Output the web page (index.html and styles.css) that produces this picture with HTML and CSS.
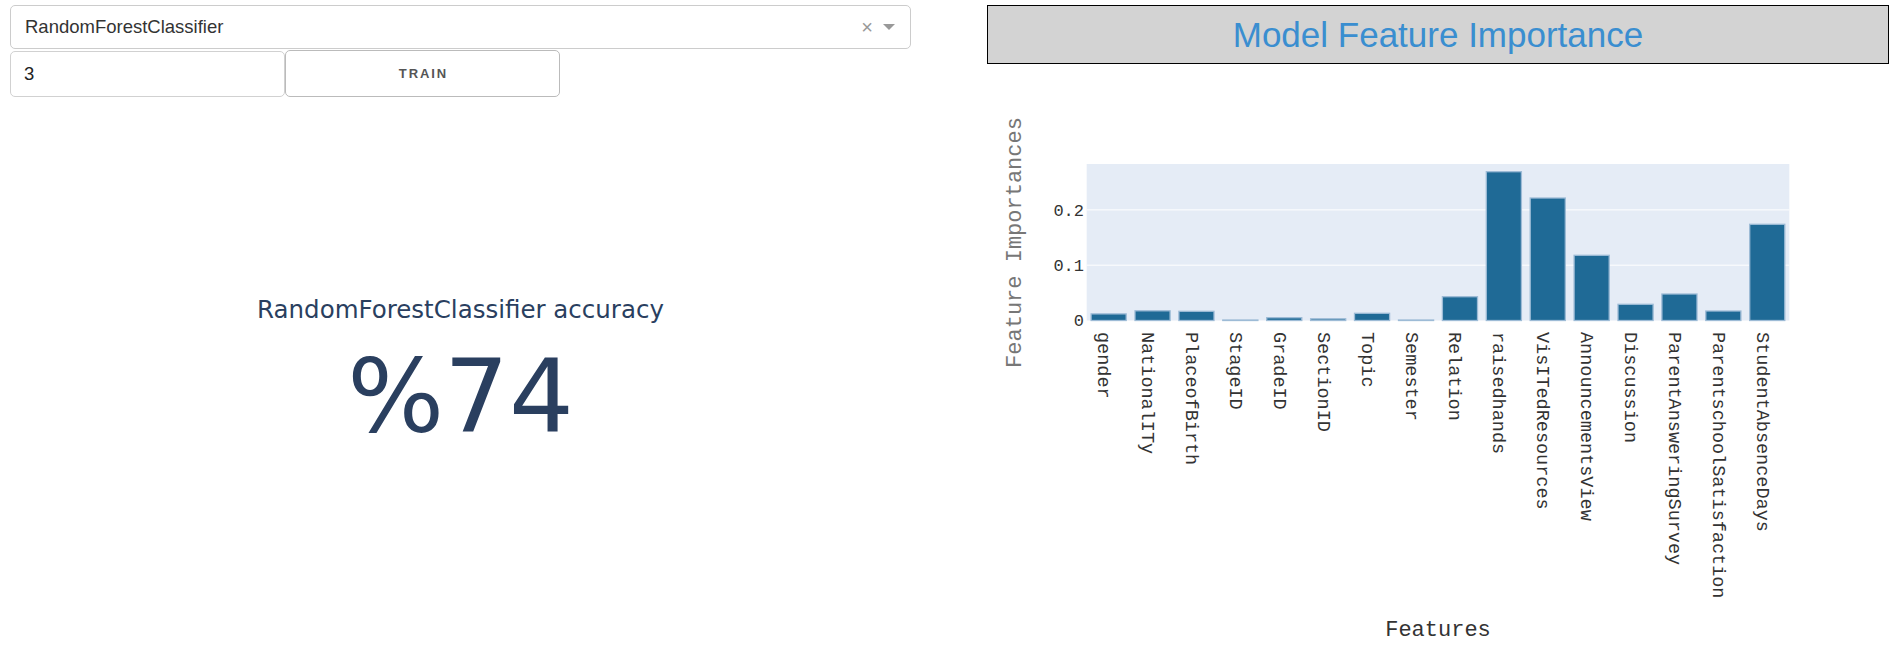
FILE: index.html
```html
<!DOCTYPE html>
<html>
<head>
<meta charset="utf-8">
<link rel="stylesheet" href="styles.css">
</head>
<body>
<div class="page">
  <div class="col left">
    <div class="dropdown">
      <span class="dd-value">RandomForestClassifier</span>
      <span class="dd-clear">×</span>
      <span class="dd-arrow"></span>
    </div>
    <div class="controls">
      <input class="num-input" type="text" value="3">
      <button class="train-btn">Train</button>
    </div>
    <div class="indicator">
      <div class="ind-title">RandomForestClassifier accuracy</div>
      <div class="ind-number">%74</div>
    </div>
  </div>
  <div class="col right">
    <div class="title-box"><h1 class="title">Model Feature Importance</h1></div>
    <svg class="chart" width="902" height="575" viewBox="987 70 902 575" xmlns="http://www.w3.org/2000/svg">
      <rect x="1086.7" y="165" width="702.6" height="156.5" fill="#e5ecf6"/>
      <line x1="1086.7" x2="1789.3" y1="266.2" y2="266.2" stroke="#fff" stroke-width="1"/>
      <line x1="1086.7" x2="1789.3" y1="210.9" y2="210.9" stroke="#fff" stroke-width="1"/>
      <g class="bars" fill="#1f6a96" stroke="#9dbbd6" stroke-width="1.3">
        <rect x="1091.1" y="314.9" width="35.1" height="6.6"/>
        <rect x="1135.0" y="311.8" width="35.1" height="9.7"/>
        <rect x="1178.9" y="312.3" width="35.1" height="9.2"/>
        <rect x="1222.8" y="321.0" width="35.1" height="0.5"/>
        <rect x="1266.7" y="318.7" width="35.1" height="2.8"/>
        <rect x="1310.6" y="319.8" width="35.1" height="1.7"/>
        <rect x="1354.5" y="314.3" width="35.1" height="7.2"/>
        <rect x="1398.5" y="321.0" width="35.1" height="0.5"/>
        <rect x="1442.4" y="297.7" width="35.1" height="23.8"/>
        <rect x="1486.3" y="172.7" width="35.1" height="148.8"/>
        <rect x="1530.2" y="199.0" width="35.1" height="122.5"/>
        <rect x="1574.1" y="256.3" width="35.1" height="65.2"/>
        <rect x="1618.0" y="305.3" width="35.1" height="16.2"/>
        <rect x="1661.9" y="295.0" width="35.1" height="26.5"/>
        <rect x="1705.8" y="312.0" width="35.1" height="9.5"/>
        <rect x="1749.7" y="225.3" width="35.1" height="96.2"/>
      </g>
      <g class="yticks" text-anchor="end">
        <text x="1084" y="327">0</text>
        <text x="1084" y="272">0.1</text>
        <text x="1084" y="216.5">0.2</text>
      </g>
      <g class="xticks">
        <text transform="translate(1102.6 333) rotate(90)">gender</text>
        <text transform="translate(1146.5 333) rotate(90)">NationalITy</text>
        <text transform="translate(1190.4 333) rotate(90)">PlaceofBirth</text>
        <text transform="translate(1234.3 333) rotate(90)">StageID</text>
        <text transform="translate(1278.2 333) rotate(90)">GradeID</text>
        <text transform="translate(1322.1 333) rotate(90)">SectionID</text>
        <text transform="translate(1366.0 333) rotate(90)">Topic</text>
        <text transform="translate(1410.0 333) rotate(90)">Semester</text>
        <text transform="translate(1453.9 333) rotate(90)">Relation</text>
        <text transform="translate(1497.8 333) rotate(90)">raisedhands</text>
        <text transform="translate(1541.7 333) rotate(90)">VisITedResources</text>
        <text transform="translate(1585.6 333) rotate(90)">AnnouncementsView</text>
        <text transform="translate(1629.5 333) rotate(90)">Discussion</text>
        <text transform="translate(1673.4 333) rotate(90)">ParentAnsweringSurvey</text>
        <text transform="translate(1717.3 333) rotate(90)">ParentschoolSatisfaction</text>
        <text transform="translate(1761.2 333) rotate(90)">StudentAbsenceDays</text>
      </g>
      <text class="axis-title" transform="translate(1021 243.5) rotate(-90)" text-anchor="middle">Feature Importances</text>
      <text class="axis-title xtitle" x="1438" y="637" text-anchor="middle">Features</text>
    </svg>
  </div>
</div>
</body>
</html>
```

FILE: styles.css
```css
html, body {
  margin: 0;
  padding: 0;
  background: #fff;
}

.page {
  display: flex;
  justify-content: space-between;
  padding: 0 6px 0 10px;
  height: 645px;
  box-sizing: border-box;
}

.col.left {
  width: 901px;
  display: flex;
  flex-direction: column;
}

.col.right {
  width: 902px;
  display: flex;
  flex-direction: column;
}

.dropdown {
  margin-top: 5px;
  height: 44px;
  box-sizing: border-box;
  border: 1px solid #ccc;
  border-radius: 5px;
  display: flex;
  align-items: center;
  padding: 0 15px 0 14px;
  font-family: "Liberation Sans", Arial, sans-serif;
  font-size: 18.5px;
  color: #333;
}

.dd-value {
  flex: 1;
}

.dd-clear {
  color: #999;
  font-size: 20px;
  line-height: 1;
  margin-right: 10px;
}

.dd-arrow {
  width: 0;
  height: 0;
  border-style: solid;
  border-width: 6px 6px 3px;
  border-color: #999 transparent transparent;
  margin-top: 3px;
}

.controls {
  display: flex;
  align-items: flex-start;
}

.num-input {
  width: 275px;
  height: 46px;
  margin: 2px 0 0 0;
  box-sizing: border-box;
  border: 1px solid #d1d1d1;
  border-radius: 5px;
  padding: 0 0 0 13px;
  font-family: "Liberation Sans", Arial, sans-serif;
  font-size: 18.5px;
  color: #222;
  outline: none;
}

.train-btn {
  width: 275px;
  height: 47px;
  margin: 1px 0 0 0;
  box-sizing: border-box;
  border: 1px solid #bbb;
  border-radius: 5px;
  background: #fff;
  padding: 0;
  font-family: "Liberation Sans", Arial, sans-serif;
  font-size: 13px;
  font-weight: 700;
  letter-spacing: 1.9px;
  text-transform: uppercase;
  color: #555;
  text-indent: 1.9px;
}

.indicator {
  margin-top: 198px;
  text-align: center;
  color: #2a3f5f;
  font-family: "DejaVu Sans", Verdana, sans-serif;
}

.ind-title {
  font-size: 24.5px;
  line-height: 30px;
}

.ind-number {
  margin-top: 22px;
  font-size: 102px;
  line-height: 100px;
}

.title-box {
  margin-top: 5px;
  height: 59px;
  box-sizing: border-box;
  border: 1px solid #000;
  background: #d3d3d3;
  display: flex;
  align-items: center;
  justify-content: center;
}

.title {
  margin: 0;
  font-family: "Liberation Sans", Arial, sans-serif;
  font-weight: 400;
  font-size: 35px;
  color: #3a8ed0;
}

.chart {
  display: block;
  margin-top: 5px;
}

.yticks text {
  font-family: "Liberation Mono", "Courier New", monospace;
  font-size: 17px;
  fill: #333;
}

.xticks text {
  font-family: "Liberation Mono", "Courier New", monospace;
  font-size: 18.5px;
  fill: #333;
  dominant-baseline: central;
}

.axis-title {
  font-family: "Liberation Mono", "Courier New", monospace;
  font-size: 22px;
  fill: #777;
}

.xtitle {
  fill: #333;
}
```
